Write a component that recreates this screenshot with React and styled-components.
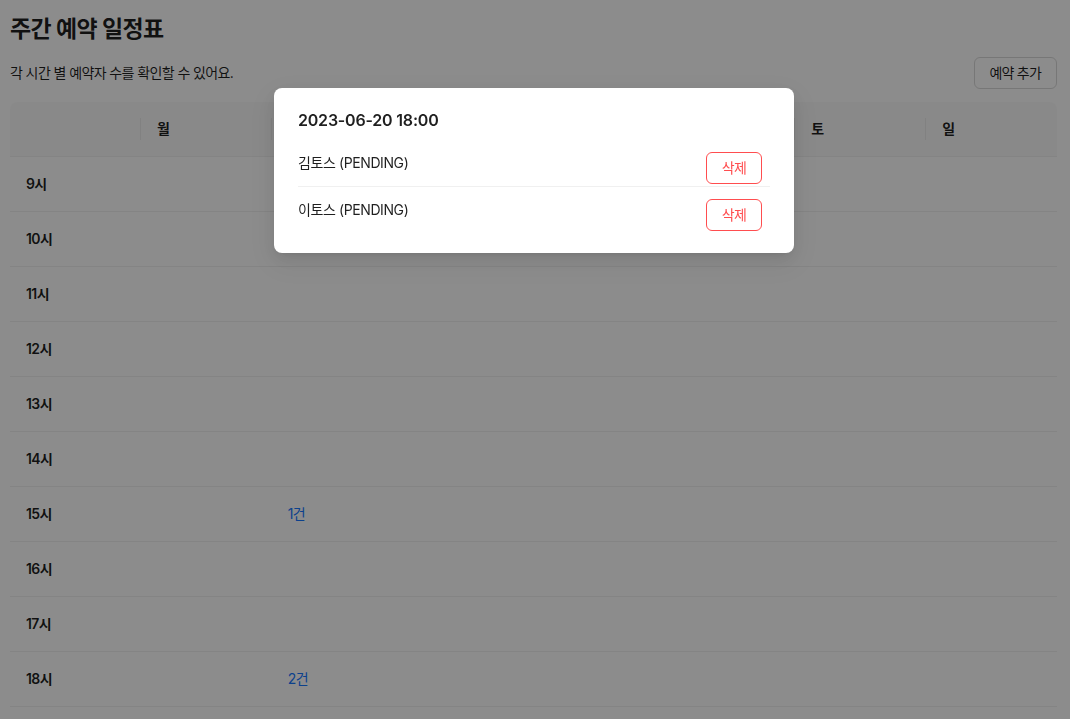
import React from 'react';
import styled, { createGlobalStyle } from 'styled-components';

const GlobalStyle = createGlobalStyle`
  body {
    margin: 0;
    background: #fff;
    color: rgba(0, 0, 0, 0.88);
    font-family: Inter, "Noto Sans CJK KR", sans-serif;
    font-size: 14px;
    letter-spacing: -0.6px;
  }
`;

const Page = styled.div`
  padding: 11px 13px 0 10px;
`;

const Title = styled.h1`
  margin: 0;
  font-size: 23px;
  line-height: 36px;
  font-weight: 700;
  letter-spacing: -0.6px;
`;

const TopBar = styled.div`
  display: flex;
  justify-content: space-between;
  align-items: center;
  margin-top: 10px;
  height: 32px;
`;

const Desc = styled.p`
  margin: 0;
  line-height: 22px;
  letter-spacing: -0.6px;
`;

const Button = styled.button`
  height: 32px;
  padding: 4px 15px;
  border-radius: 6px;
  font-family: inherit;
  font-size: 14px;
  line-height: 22px;
  letter-spacing: -0.8px;
  background: #fff;
  cursor: pointer;
  border: 1px solid ${p => (p.$danger ? '#ff4d4f' : '#d9d9d9')};
  color: ${p => (p.$danger ? '#ff4d4f' : 'rgba(0, 0, 0, 0.88)')};
`;

const Table = styled.table`
  margin-top: 13px;
  width: 100%;
  table-layout: fixed;
  border-collapse: separate;
  border-spacing: 0;
`;

const Th = styled.th`
  position: relative;
  padding: 16px;
  text-align: left;
  font-weight: 600;
  line-height: 22px;
  background: #fafafa;
  border-bottom: 1px solid #f0f0f0;

  &:first-child { border-top-left-radius: 8px; }
  &:last-child { border-top-right-radius: 8px; }

  &:not(:last-child)::before {
    content: '';
    position: absolute;
    right: 0;
    top: 50%;
    width: 1px;
    height: 22px;
    transform: translateY(-50%);
    background: rgba(0, 0, 0, 0.06);
  }
`;

const Td = styled.td`
  padding: 16px;
  line-height: 22px;
  border-bottom: 1px solid #f0f0f0;
  font-weight: ${p => (p.$time ? 600 : 400)};
`;

const Count = styled.a`
  color: #1677ff;
  text-decoration: none;
  cursor: pointer;
`;

const Mask = styled.div`
  position: fixed;
  inset: 0;
  background: rgba(0, 0, 0, 0.45);
  display: flex;
  justify-content: center;
  align-items: flex-start;
  padding: 88px 2px 0 0;
`;

const Modal = styled.div`
  width: 520px;
  box-sizing: border-box;
  padding: 20px 24px;
  background: #fff;
  border-radius: 8px;
  box-shadow: 0 6px 16px 0 rgba(0, 0, 0, 0.08), 0 3px 6px -4px rgba(0, 0, 0, 0.12),
    0 9px 28px 8px rgba(0, 0, 0, 0.05);
`;

const ModalTitle = styled.div`
  font-size: 16px;
  font-weight: 600;
  line-height: 24px;
  letter-spacing: -0.2px;
  margin-bottom: 8px;
`;

const List = styled.ul`
  list-style: none;
  margin: 0;
  padding: 0;
`;

const Item = styled.li`
  display: flex;
  justify-content: space-between;
  align-items: flex-start;
  padding: 12px 8px 2px 0;
  line-height: 22px;
  letter-spacing: -0.4px;

  & + & { border-top: 1px solid rgba(5, 5, 5, 0.06); }
`;

const days = ['월', '화', '수', '목', '금', '토', '일'];
const hours = [9, 10, 11, 12, 13, 14, 15, 16, 17, 18, 19, 20, 21];
const counts = { '15-화': 1, '18-화': 2 };
const reservations = ['김토스 (PENDING)', '이토스 (PENDING)'];

export default function App() {
  return (
    <>
      <GlobalStyle />
      <Page>
        <Title>주간 예약 일정표</Title>
        <TopBar>
          <Desc>각 시간 별 예약자 수를 확인할 수 있어요.</Desc>
          <Button>예약 추가</Button>
        </TopBar>
        <Table>
          <thead>
            <tr>
              <Th />
              {days.map(d => <Th key={d}>{d}</Th>)}
            </tr>
          </thead>
          <tbody>
            {hours.map(h => (
              <tr key={h}>
                <Td $time>{h}시</Td>
                {days.map(d => (
                  <Td key={d}>
                    {counts[`${h}-${d}`] && <Count>{counts[`${h}-${d}`]}건</Count>}
                  </Td>
                ))}
              </tr>
            ))}
          </tbody>
        </Table>
      </Page>
      <Mask>
        <Modal>
          <ModalTitle>2023-06-20 18:00</ModalTitle>
          <List>
            {reservations.map(r => (
              <Item key={r}>
                <span>{r}</span>
                <Button $danger>삭제</Button>
              </Item>
            ))}
          </List>
        </Modal>
      </Mask>
    </>
  );
}
